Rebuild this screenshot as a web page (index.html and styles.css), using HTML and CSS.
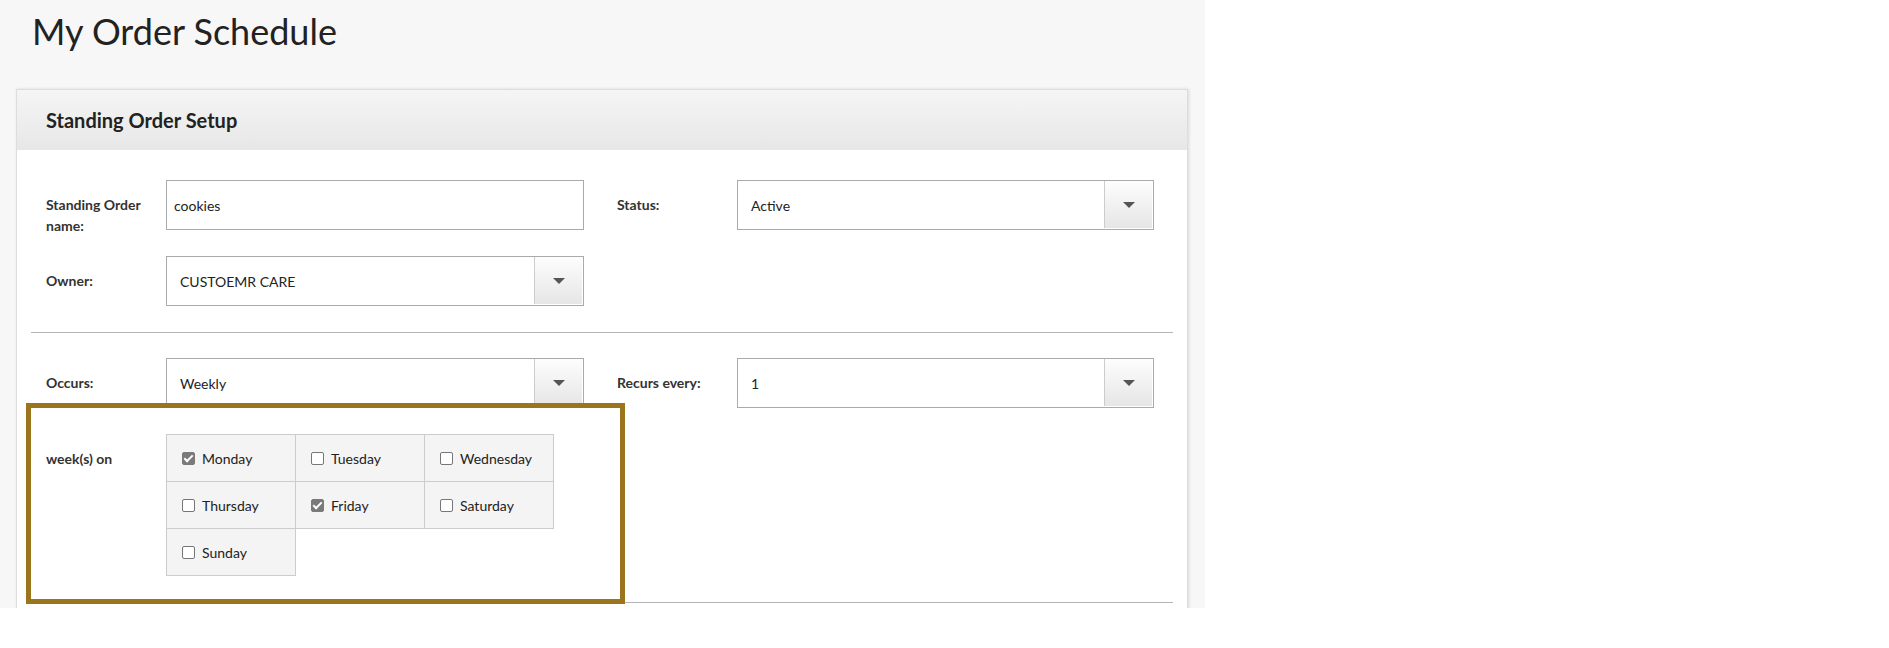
FILE: index.html
```html
<!DOCTYPE html>
<html>
<head>
<title>My Order Schedule</title>
<link rel="stylesheet" href="styles.css">
</head>
<body>

<div class="page">
  <h1 class="page-title">My Order Schedule</h1>

  <div class="panel">
    <div class="panel-heading">
      <h2>Standing Order Setup</h2>
    </div>

    <div class="panel-body">
      <div class="form-row">
        <div class="field">
          <label class="field-label">Standing Order name:</label>
          <input class="text-input" type="text" value="cookies">
        </div>
        <div class="field">
          <label class="field-label">Status:</label>
          <div class="dropdown">
            <span class="dropdown-value">Active</span>
            <span class="dropdown-btn"><i class="caret"></i></span>
          </div>
        </div>
      </div>

      <div class="form-row">
        <div class="field">
          <label class="field-label">Owner:</label>
          <div class="dropdown">
            <span class="dropdown-value">CUSTOEMR CARE</span>
            <span class="dropdown-btn"><i class="caret"></i></span>
          </div>
        </div>
      </div>

      <hr class="divider">

      <div class="form-row">
        <div class="field">
          <label class="field-label">Occurs:</label>
          <div class="dropdown">
            <span class="dropdown-value">Weekly</span>
            <span class="dropdown-btn"><i class="caret"></i></span>
          </div>
        </div>
        <div class="field">
          <label class="field-label">Recurs every:</label>
          <div class="dropdown">
            <span class="dropdown-value">1</span>
            <span class="dropdown-btn"><i class="caret"></i></span>
          </div>
        </div>
      </div>

      <div class="form-row">
        <div class="field">
          <label class="field-label">week(s) on</label>
          <div class="days">
            <label class="day"><input type="checkbox" checked>Monday</label>
            <label class="day"><input type="checkbox">Tuesday</label>
            <label class="day"><input type="checkbox">Wednesday</label>
            <label class="day"><input type="checkbox">Thursday</label>
            <label class="day"><input type="checkbox" checked>Friday</label>
            <label class="day"><input type="checkbox">Saturday</label>
            <label class="day"><input type="checkbox">Sunday</label>
          </div>
        </div>
      </div>

      <hr class="divider">
    </div>
  </div>

  <!-- outline drawn over the weekday picker -->
  <div class="highlight"></div>
</div>

</body>
</html>
```

FILE: styles.css
```css
body {
  margin: 0;
  background-color: #fff;
  font-family: Lato, "Open Sans", sans-serif;
  color: #333;
}

.page {
  position: relative;
  width: 1205px;
  height: 608px;
  padding: 0 17px 0 16px;
  box-sizing: border-box;
  background-color: #f7f7f7;
  overflow: hidden;
}

.page-title {
  margin: 0 0 36px 16px;
  padding-top: 10px;
  font-size: 36px;
  font-weight: normal;
  line-height: 43px;
  color: #222;
}

.panel {
  background-color: #fff;
  border: 1px solid #ddd;
  box-shadow: 1px 0 3px rgba(0, 0, 0, 0.12);
}

.panel-heading {
  height: 60px;
  padding-left: 29px;
  background: linear-gradient(#f5f5f5, #e7e7e7);
}

.panel-heading h2 {
  margin: 0;
  font-size: 20px;
  line-height: 60px;
  font-weight: bold;
  color: #222;
}

.panel-body {
  padding: 30px 14px 0;
}

.form-row {
  display: grid;
  grid-template-columns: 538px 537px;
  column-gap: 33px;
  padding-left: 15px;
  margin-bottom: 26px;
}

.field {
  display: flex;
  align-items: flex-start;
}

/* fixed height so a wrapped label doesn't grow the row */
.field-label {
  width: 120px;
  height: 50px;
  flex-shrink: 0;
  padding: 14px 12px 0 0;
  box-sizing: border-box;
  font-size: 14px;
  font-weight: bold;
  line-height: 21px;
  color: #333;
}

.text-input {
  flex: 1;
  height: 50px;
  margin: 0;
  padding: 0 7px;
  border: 1px solid #aaa;
  box-sizing: border-box;
  font-family: inherit;
  font-size: 14px;
  color: #222;
  outline: none;
}

.dropdown {
  flex: 1;
  display: flex;
  height: 50px;
  border: 1px solid #aaa;
  box-sizing: border-box;
  background-color: #fff;
}

.dropdown-value {
  flex: 1;
  padding: 1px 0 0 13px;
  font-size: 14px;
  line-height: 48px;
  color: #222;
}

.dropdown-btn {
  display: flex;
  align-items: center;
  justify-content: center;
  width: 47px;
  margin: 0 1px 1px 0;
  border-left: 1px solid #ccc;
  background: linear-gradient(#fdfdfd, #e6e6e6);
}

.caret {
  width: 0;
  height: 0;
  border-left: 6px solid transparent;
  border-right: 6px solid transparent;
  border-top: 6px solid #555;
}

.divider {
  margin: 0 0 25px;
  border: none;
  border-top: 1px solid #b5b5b5;
}

.days {
  display: grid;
  grid-template-columns: repeat(3, 129px);
  border-top: 1px solid #ccc;
  border-left: 1px solid #ccc;
}

.day {
  display: flex;
  align-items: center;
  height: 46px;
  padding-left: 15px;
  border-right: 1px solid #ccc;
  border-bottom: 1px solid #ccc;
  background-color: #f4f4f4;
  font-size: 14px;
  line-height: 21px;
  color: #222;
}

.day input {
  position: relative;
  appearance: none;
  -webkit-appearance: none;
  width: 13px;
  height: 13px;
  margin: 0 7px 0 0;
  border: 1px solid #767676;
  border-radius: 2px;
  background-color: #fff;
  box-sizing: border-box;
}

.day input:checked {
  background-color: #7a7a7a;
  border-color: #7a7a7a;
}

.day input:checked::after {
  content: "";
  position: absolute;
  left: 3px;
  top: 0px;
  width: 3px;
  height: 7px;
  border: solid #fff;
  border-width: 0 2px 2px 0;
  transform: rotate(45deg);
}

.highlight {
  position: absolute;
  left: 26px;
  top: 403px;
  width: 599px;
  height: 201px;
  border: 5px solid #9a751b;
  box-sizing: border-box;
}
```
